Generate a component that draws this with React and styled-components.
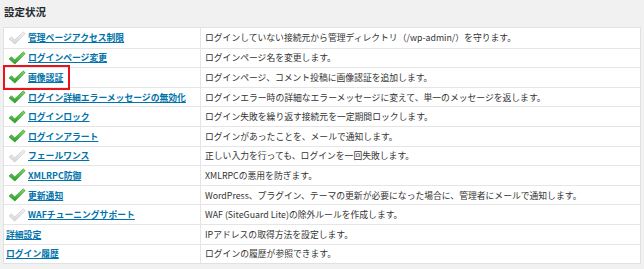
import React from "react";
import styled, { createGlobalStyle } from "styled-components";

const Global = createGlobalStyle`
  html, body {
    margin: 0;
    background: #f1f1f1;
  }
  body {
    font-family: "Noto Sans CJK JP", "Noto Sans", "Liberation Sans", sans-serif;
    color: #333;
  }
`;

const Page = styled.div`
  width: 644px;
  height: 269px;
  padding: 4px 3px 0 3px;
  box-sizing: border-box;
  overflow: hidden;
`;

const Title = styled.h2`
  margin: 0 0 0 1px;
  font-size: 10.5px;
  font-weight: bold;
  color: #23282d;
  line-height: 16px;
  height: 23px;
`;

const Table = styled.div`
  width: 638px;
  box-sizing: border-box;
  background: #fff;
  border: 1px solid #e1e1e1;
  font-size: 8.8px;
`;

const Row = styled.div`
  display: grid;
  grid-template-columns: 197px 1fr;
  height: 19.6px;
  box-sizing: border-box;
  border-top: ${(p) => (p.$first ? "none" : "1px solid #e5e5e5")};
`;

const NameCell = styled.div`
  display: flex;
  align-items: center;
  padding-left: 2px;
  border-right: 1px solid #e5e5e5;
  position: relative;
`;

const DescCell = styled.div`
  display: flex;
  align-items: center;
  padding-left: 4px;
  color: #333;
  white-space: nowrap;
`;

const Feature = styled.span`
  display: inline-flex;
  align-items: center;
  gap: 2px;
  padding-left: ${(p) => (p.$icon ? "2px" : "0")};
`;

const Mark = styled.span`
  position: absolute;
  left: -1px;
  top: -3px;
  width: 67px;
  height: 25px;
  box-sizing: border-box;
  border: 2px solid #e8141c;
  pointer-events: none;
`;

const Link = styled.a`
  color: #0073aa;
  font-weight: bold;
  text-decoration: underline;
  white-space: nowrap;
`;

function Check({ on }) {
  const id = on ? "gOn" : "gOff";
  return (
    <svg width="18" height="14" viewBox="0 0 19 15">
      <defs>
        <linearGradient id={id} x1="0" y1="0" x2="0" y2="1">
          {on ? (
            <>
              <stop offset="0" stopColor="#7ddc6a" />
              <stop offset="1" stopColor="#23a022" />
            </>
          ) : (
            <>
              <stop offset="0" stopColor="#f4f4f4" />
              <stop offset="1" stopColor="#d6d6d6" />
            </>
          )}
        </linearGradient>
      </defs>
      <path
        d="M1 8.5 L3.6 6.2 L7 9.6 L16.2 1 L18.2 2.8 L7.2 14 Z"
        fill={`url(#${id})`}
        stroke={on ? "#2c8a22" : "#c4c4c4"}
        strokeWidth="0.7"
        strokeLinejoin="round"
      />
    </svg>
  );
}

const rows = [
  { name: "管理ページアクセス制限", icon: "off", desc: "ログインしていない接続元から管理ディレクトリ（/wp-admin/）を守ります。" },
  { name: "ログインページ変更", icon: "on", desc: "ログインページ名を変更します。" },
  { name: "画像認証", icon: "on", marked: true, desc: "ログインページ、コメント投稿に画像認証を追加します。" },
  { name: "ログイン詳細エラーメッセージの無効化", icon: "on", desc: "ログインエラー時の詳細なエラーメッセージに変えて、単一のメッセージを返します。" },
  { name: "ログインロック", icon: "on", desc: "ログイン失敗を繰り返す接続元を一定期間ロックします。" },
  { name: "ログインアラート", icon: "on", desc: "ログインがあったことを、メールで通知します。" },
  { name: "フェールワンス", icon: "off", desc: "正しい入力を行っても、ログインを一回失敗します。" },
  { name: "XMLRPC防御", icon: "on", desc: "XMLRPCの悪用を防ぎます。" },
  { name: "更新通知", icon: "on", desc: "WordPress、プラグイン、テーマの更新が必要になった場合に、管理者にメールで通知します。" },
  { name: "WAFチューニングサポート", icon: "off", desc: "WAF (SiteGuard Lite)の除外ルールを作成します。" },
  { name: "詳細設定", desc: "IPアドレスの取得方法を設定します。" },
  { name: "ログイン履歴", desc: "ログインの履歴が参照できます。" },
];

export default function App() {
  return (
    <Page>
      <Global />
      <Title>設定状況</Title>
      <Table>
        {rows.map((r, i) => (
          <Row key={r.name} $first={i === 0}>
            <NameCell>
              <Feature $icon={!!r.icon}>
                {r.icon && <Check on={r.icon === "on"} />}
                <Link href="#">{r.name}</Link>
              </Feature>
              {r.marked && <Mark />}
            </NameCell>
            <DescCell>{r.desc}</DescCell>
          </Row>
        ))}
      </Table>
    </Page>
  );
}
